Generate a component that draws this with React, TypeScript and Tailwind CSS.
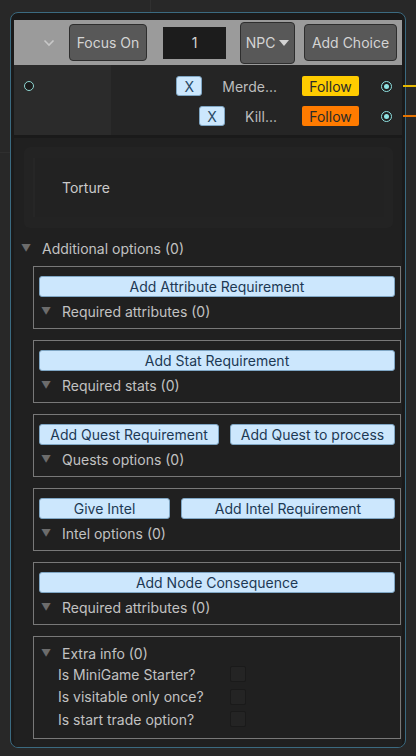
import { ReactNode } from "react";

const font = { fontFamily: "Inter, 'Noto Sans', sans-serif" };

function BlueButton({ children, className = "" }: { children: ReactNode; className?: string }) {
  return (
    <div
      className={`h-[21px] flex items-center justify-center rounded-[3px] border border-[#7fa6c4] bg-[#cce7fd] text-[14px] text-[#1d3954] leading-none ${className}`}
    >
      {children}
    </div>
  );
}

function Foldout({ label, className = "" }: { label: string; className?: string }) {
  return (
    <div className={`flex items-center text-[14px] text-[#c2c2c2] ${className}`}>
      <span className="w-[17px] text-[10px] text-[#6c6c6c] pl-[2px]">▼</span>
      <span className="ml-[6px]">{label}</span>
    </div>
  );
}

function Section({ children, className = "" }: { children: ReactNode; className?: string }) {
  return (
    <div className={`ml-[19px] mr-[1px] border border-[#787878] bg-[#202020] px-[5px] ${className}`}>
      {children}
    </div>
  );
}

function Port({ filled }: { filled?: boolean }) {
  return filled ? (
    <div className="w-[11px] h-[11px] rounded-full border-[1.5px] border-[#8fe3e3] bg-[#1f1f1f] flex items-center justify-center">
      <div className="w-[5px] h-[5px] rounded-full bg-[#8fe3e3]" />
    </div>
  ) : (
    <div className="w-[10px] h-[10px] rounded-full border-[1.5px] border-[#8fd6d2] bg-[#1b1b1b]" />
  );
}

function ChoiceRow({ label, color }: { label: string; color: string }) {
  return (
    <div className="h-[30px] flex items-center justify-end pr-[10px]">
      <div className="w-[26px] h-[20px] flex items-center justify-center rounded-[3px] border border-[#7fa6c4] bg-[#cce7fd] text-[14px] text-[#2a4a66]">
        X
      </div>
      <span className="ml-[20px] text-[14px] text-[#bdbdbd]">{label}</span>
      <div
        className={`ml-[25px] w-[57px] h-[20px] flex items-center justify-center rounded-[2px] text-[14px] text-[#2a2a2a] ${color}`}
      >
        Follow
      </div>
      <div className="ml-[22px]">
        <Port filled />
      </div>
    </div>
  );
}

function CheckRow({ label }: { label: string }) {
  return (
    <div className="h-[22.5px] flex items-center">
      <span className="ml-[19px] w-[172px] text-[14px] text-[#c2c2c2]">{label}</span>
      <div className="w-[16px] h-[16px] rounded-[2px] border border-[#1a1a1a] bg-[#242424]" />
    </div>
  );
}

export default function App() {
  return (
    <div className="relative w-[416px] h-[756px] overflow-hidden bg-[#282828]" style={font}>
      {/* canvas grid lines */}
      <div className="absolute left-[150px] top-0 w-px h-[12px] bg-[#303030]" />
      <div className="absolute left-0 top-[152px] w-[10px] h-px bg-[#2f2f2f]" />
      {/* edges leaving the ports */}
      <div className="absolute left-[403px] top-[85px] w-[13px] h-[2px] bg-[#e6b800]" />
      <div className="absolute left-[403px] top-[115px] w-[13px] h-[2px] bg-[#e67300]" />

      <div className="ml-[10px] mt-[12px] w-[396px] h-[736px] rounded-[8px] border border-[#3b6a80] bg-[#1a1a1a] px-[3px] pt-[7px] overflow-hidden">
        {/* title bar */}
        <div className="h-[45px] bg-[#9b9b9b] flex items-center text-[14px] text-[#d4d4d4]">
          <svg className="ml-[29px]" width="12" height="8" viewBox="0 0 12 8">
            <path d="M1.5 1.5 L6 6 L10.5 1.5" stroke="#c8c8c8" strokeWidth="1.6" fill="none" />
          </svg>
          <div className="ml-[14px] w-[78px] h-[37px] rounded-[4px] border border-[#2e2e2e] bg-[#585858] flex items-center justify-center">
            Focus On
          </div>
          <div className="ml-[16px] w-[63px] h-[32px] bg-[#1c1c1c] flex items-center justify-center">1</div>
          <div className="ml-[14px] w-[55px] h-[42px] rounded-[4px] border border-[#2e2e2e] bg-[#585858] flex items-center justify-center gap-[4px]">
            NPC
            <svg width="10" height="6" viewBox="0 0 10 6">
              <path d="M0 0 H10 L5 6 Z" fill="#d4d4d4" />
            </svg>
          </div>
          <div className="ml-[9px] w-[93px] h-[37px] rounded-[4px] border border-[#2e2e2e] bg-[#585858] flex items-center justify-center">
            Add Choice
          </div>
        </div>

        {/* ports / choices */}
        <div className="h-[70px] flex">
          <div className="w-[97px] bg-[#2b2b2b] pt-[16px] pl-[10px]">
            <Port />
          </div>
          <div className="flex-1 bg-[#252525] pt-[6px]">
            <ChoiceRow label="Merde..." color="bg-[#ffcc00]" />
            <ChoiceRow label="Kill..." color="bg-[#ff7b00]" />
          </div>
        </div>

        {/* body */}
        <div className="mt-[3px] h-[620px] bg-[#202020] pt-[9px]">
          <div className="ml-[10px] w-[369px] h-[81px] rounded-[6px] bg-[#232323] px-[9px] py-[11px]">
            <div className="h-[59px] bg-[#222222] border-l-[2px] border-[#262626] flex items-center pl-[27px] text-[14px] text-[#cacaca]">
              Torture
            </div>
          </div>

          <Foldout label="Additional options (0)" className="mt-[12px] ml-[5px] h-[16px]" />

          <Section className="mt-[10px] h-[63px] pt-[9px]">
            <BlueButton>Add Attribute Requirement</BlueButton>
            <Foldout label="Required attributes (0)" className="mt-[4px] h-[20px]" />
          </Section>

          <Section className="mt-[11px] h-[63px] pt-[9px]">
            <BlueButton>Add Stat Requirement</BlueButton>
            <Foldout label="Required stats (0)" className="mt-[4px] h-[20px]" />
          </Section>

          <Section className="mt-[11px] h-[63px] pt-[9px]">
            <div className="flex gap-[11px]">
              <BlueButton className="w-[180px]">Add Quest Requirement</BlueButton>
              <BlueButton className="flex-1">Add Quest to process</BlueButton>
            </div>
            <Foldout label="Quests options (0)" className="mt-[4px] h-[20px]" />
          </Section>

          <Section className="mt-[11px] h-[63px] pt-[9px]">
            <div className="flex gap-[11px]">
              <BlueButton className="w-[131px]">Give Intel</BlueButton>
              <BlueButton className="flex-1">Add Intel Requirement</BlueButton>
            </div>
            <Foldout label="Intel options (0)" className="mt-[4px] h-[20px]" />
          </Section>

          <Section className="mt-[11px] h-[63px] pt-[9px]">
            <BlueButton>Add Node Consequence</BlueButton>
            <Foldout label="Required attributes (0)" className="mt-[4px] h-[20px]" />
          </Section>

          <Section className="mt-[11px] h-[103px] pt-[6px]">
            <Foldout label="Extra info (0)" className="h-[20px]" />
            <CheckRow label="Is MiniGame Starter?" />
            <CheckRow label="Is visitable only once?" />
            <CheckRow label="Is start trade option?" />
          </Section>
        </div>
      </div>
    </div>
  );
}
